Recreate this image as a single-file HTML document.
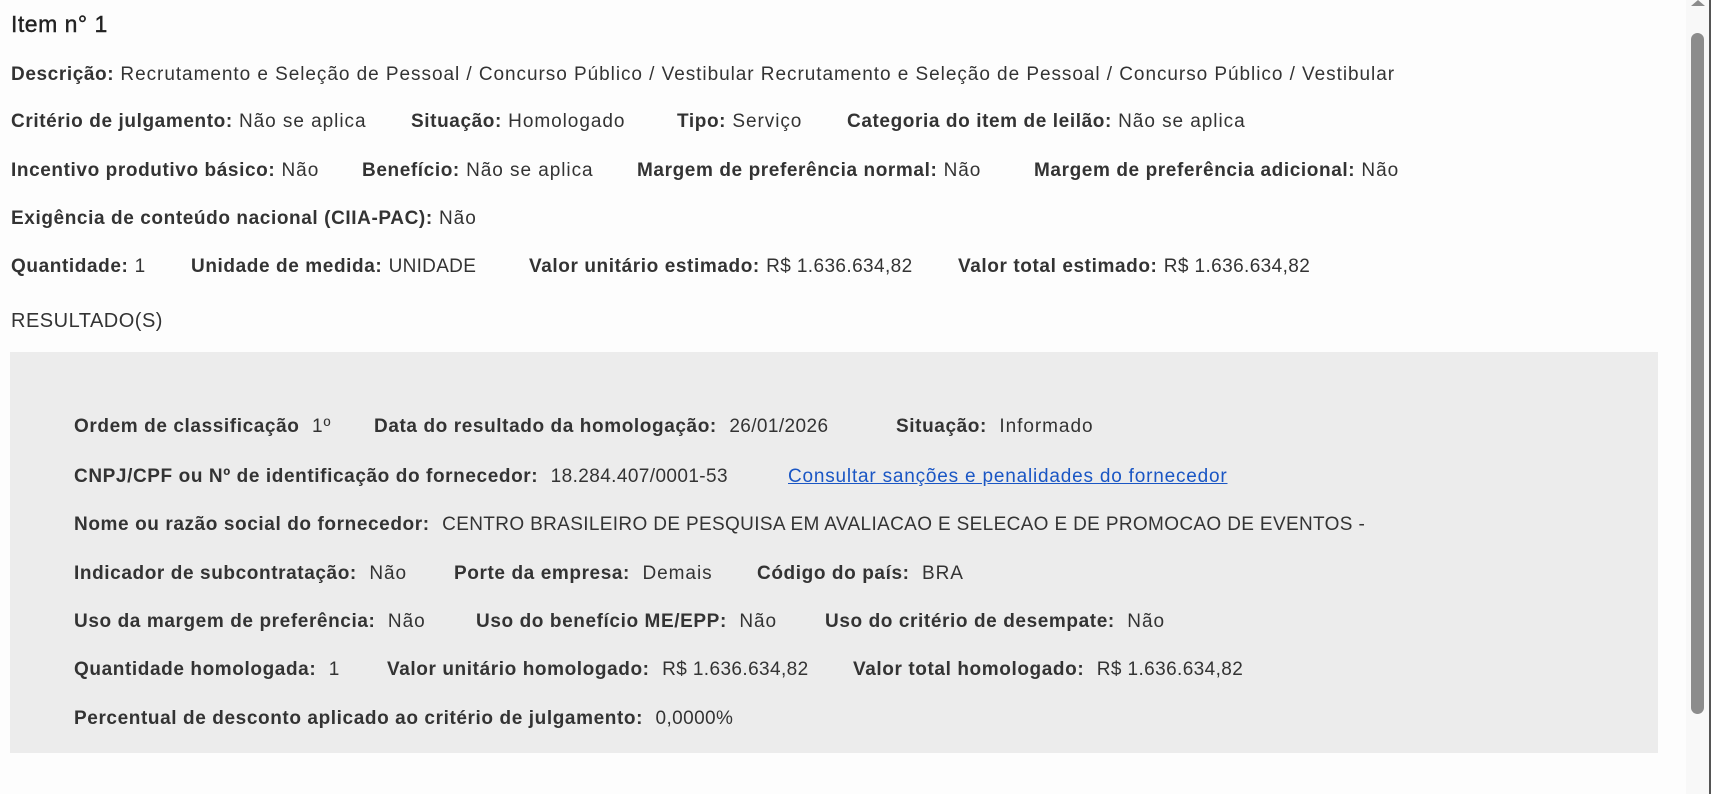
<!DOCTYPE html>
<html><head><meta charset="utf-8"><style>
html,body{margin:0;padding:0;background:#fdfdfd;width:1711px;height:794px;overflow:hidden;position:relative}
body{font-family:"Liberation Sans",sans-serif;color:#333;font-size:19px;letter-spacing:0.95px}
.t{position:absolute;white-space:nowrap;line-height:24px;transform:translateY(-10px)}
b{font-weight:bold;letter-spacing:0.6px}
.box{position:absolute;left:10px;top:352px;width:1648px;height:401px;background:#ececec}
a{color:#1a56c4;text-decoration:underline;letter-spacing:0.8px}
.sb{position:absolute;left:1686px;top:0;width:23px;height:794px;background:#f8f8f8}
.th{position:absolute;left:1691px;top:33px;width:13px;height:681px;background:#8c8c8c;border-radius:7px}
.edge{position:absolute;left:1709px;top:0;width:2px;height:794px;background:#555}
</style></head><body>
<div class="t" style="left:11px;top:22px;font-size:23px;letter-spacing:0.5px;color:#222;-webkit-text-stroke:0.4px #222">Item n° 1</div>
<div class="t" style="left:11px;top:73px"><b>Descrição:</b> Recrutamento e Seleção de Pessoal / Concurso Público / Vestibular Recrutamento e Seleção de Pessoal / Concurso Público / Vestibular</div>

<div class="t" style="left:11px;top:120px"><b>Critério de julgamento:</b> Não se aplica</div>
<div class="t" style="left:411px;top:120px"><b>Situação:</b> Homologado</div>
<div class="t" style="left:677px;top:120px"><b>Tipo:</b> Serviço</div>
<div class="t" style="left:847px;top:120px"><b>Categoria do item de leilão:</b> Não se aplica</div>

<div class="t" style="left:11px;top:169px"><b>Incentivo produtivo básico:</b> Não</div>
<div class="t" style="left:362px;top:169px"><b>Benefício:</b> Não se aplica</div>
<div class="t" style="left:637px;top:169px"><b>Margem de preferência normal:</b> Não</div>
<div class="t" style="left:1034px;top:169px"><b>Margem de preferência adicional:</b> Não</div>

<div class="t" style="left:11px;top:217px"><b>Exigência de conteúdo nacional (CIIA-PAC):</b> Não</div>

<div class="t" style="left:11px;top:265px"><b>Quantidade:</b> 1</div>
<div class="t" style="left:191px;top:265px"><b>Unidade de medida:</b> <span style="letter-spacing:0.3px">UNIDADE</span></div>
<div class="t" style="left:529px;top:265px"><b>Valor unitário estimado:</b> <span style="letter-spacing:0.4px">R$ 1.636.634,82</span></div>
<div class="t" style="left:958px;top:265px"><b>Valor total estimado:</b> <span style="letter-spacing:0.4px">R$ 1.636.634,82</span></div>

<div class="t" style="left:11px;top:319px;font-size:20px;letter-spacing:0.5px">RESULTADO(S)</div>

<div class="box"></div>
<div class="t" style="left:74px;top:425px"><b>Ordem de classificação</b>&nbsp; 1º</div>
<div class="t" style="left:374px;top:425px"><b>Data do resultado da homologação:</b>&nbsp; <span style="letter-spacing:0.4px">26/01/2026</span></div>
<div class="t" style="left:896px;top:425px"><b>Situação:</b>&nbsp; Informado</div>

<div class="t" style="left:74px;top:475px"><b>CNPJ/CPF ou Nº de identificação do fornecedor:</b>&nbsp; <span style="letter-spacing:0.4px">18.284.407/0001-53</span></div>
<div class="t" style="left:788px;top:475px"><a>Consultar sanções e penalidades do fornecedor</a></div>

<div class="t" style="left:74px;top:523px"><b>Nome ou razão social do fornecedor:</b>&nbsp; <span style="letter-spacing:0.35px">CENTRO BRASILEIRO DE PESQUISA EM AVALIACAO E SELECAO E DE PROMOCAO DE EVENTOS -</span></div>

<div class="t" style="left:74px;top:572px"><b>Indicador de subcontratação:</b>&nbsp; Não</div>
<div class="t" style="left:454px;top:572px"><b>Porte da empresa:</b>&nbsp; Demais</div>
<div class="t" style="left:757px;top:572px"><b>Código do país:</b>&nbsp; BRA</div>

<div class="t" style="left:74px;top:620px"><b>Uso da margem de preferência:</b>&nbsp; Não</div>
<div class="t" style="left:476px;top:620px"><b>Uso do benefício ME/EPP:</b>&nbsp; Não</div>
<div class="t" style="left:825px;top:620px"><b>Uso do critério de desempate:</b>&nbsp; Não</div>

<div class="t" style="left:74px;top:668px"><b>Quantidade homologada:</b>&nbsp; 1</div>
<div class="t" style="left:387px;top:668px"><b>Valor unitário homologado:</b>&nbsp; <span style="letter-spacing:0.4px">R$ 1.636.634,82</span></div>
<div class="t" style="left:853px;top:668px"><b>Valor total homologado:</b>&nbsp; <span style="letter-spacing:0.4px">R$ 1.636.634,82</span></div>

<div class="t" style="left:74px;top:717px"><b>Percentual de desconto aplicado ao critério de julgamento:</b>&nbsp; <span style="letter-spacing:0.4px">0,0000%</span></div>

<div class="sb"></div>
<svg style="position:absolute;left:1690px;top:0" width="16" height="8"><path d="M1 6 L8 0 L15 6 Z" fill="#8c8c8c"/></svg>
<div class="th"></div>
<div class="edge"></div>
</body></html>
